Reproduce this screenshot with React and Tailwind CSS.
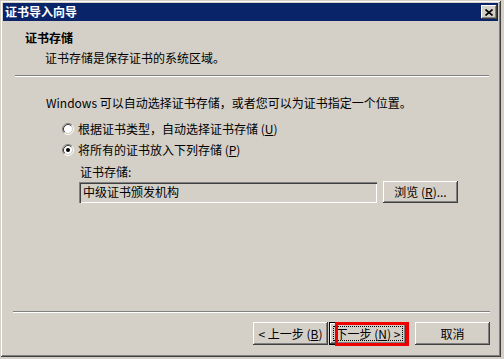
import React from "react";

const btn =
  "flex items-center justify-center bg-[#d4d0c8] text-[12px] leading-none text-black shadow-[inset_-1px_-1px_0_#404040,inset_1px_1px_0_#ffffff,inset_-2px_-2px_0_#808080,inset_2px_2px_0_#d4d0c8]";

function Radio({ checked }) {
  return (
    <svg width="12" height="12" viewBox="0 0 12 12" className="shrink-0">
      <circle cx="6" cy="6" r="4" fill="#ffffff" />
      <path d="M2.11 9.89 A5.5 5.5 0 0 1 9.89 2.11" stroke="#808080" strokeWidth="1" fill="none" />
      <path d="M9.89 2.11 A5.5 5.5 0 0 1 2.11 9.89" stroke="#ffffff" strokeWidth="1" fill="none" />
      <path d="M2.82 9.18 A4.5 4.5 0 0 1 9.18 2.82" stroke="#404040" strokeWidth="1" fill="none" />
      <path d="M9.18 2.82 A4.5 4.5 0 0 1 2.82 9.18" stroke="#d4d0c8" strokeWidth="1" fill="none" />
      {checked && <circle cx="6" cy="6" r="2" fill="#000000" />}
    </svg>
  );
}

function Sep({ className }) {
  return (
    <div className={className}>
      <div className="h-px bg-[#808080]" />
      <div className="h-px bg-white" />
    </div>
  );
}

export default function App() {
  return (
    <div
      className="w-[504px] h-[359px] bg-[#d4d0c8] overflow-hidden text-black"
      style={{ fontFamily: '"Noto Sans CJK SC", "Liberation Sans", sans-serif' }}
    >
      <div className="relative w-[501px] h-[357px] bg-[#d4d0c8] p-[3px] flex flex-col shadow-[inset_1px_1px_0_#d4d0c8,inset_-1px_-1px_0_#404040,inset_2px_2px_0_#ffffff,inset_-2px_-2px_0_#808080]">
        {/* Title bar */}
        <div className="h-[18px] bg-[#0a246a] flex items-center justify-between pl-[2px] pr-[1px]">
          <span className="text-white font-bold text-[12px] leading-none">证书导入向导</span>
          <div className={btn + " w-[16px] h-[14px]"}>
            <svg width="8" height="7" viewBox="0 0 8 7">
              <path d="M0.5 0.5 L7.5 6.5 M7.5 0.5 L0.5 6.5" stroke="#000" strokeWidth="1.6" />
            </svg>
          </div>
        </div>

        {/* Content */}
        <div className="flex-1 flex flex-col text-[12px]">
          <div className="pl-[22px] pt-[10px]">
            <div className="h-[14px] leading-[14px] font-bold">证书存储</div>
            <div className="h-[14px] leading-[14px] pl-[20px] mt-[6px]">
              证书存储是保存证书的系统区域。
            </div>
          </div>
          <Sep className="mt-[10px] ml-[12px] mr-[9px]" />

          <div className="pl-[43px] flex flex-col">
            <div className="mt-[19px] h-[14px] leading-[14px] whitespace-nowrap">
              Windows 可以自动选择证书存储，或者您可以为证书指定一个位置。
            </div>
            <div className="mt-[12px] h-[14px] pl-[16px] flex items-center gap-[4px] whitespace-nowrap">
              <Radio checked={false} />
              <span className="leading-[14px]">
                根据证书类型，自动选择证书存储 (<span className="underline">U</span>)
              </span>
            </div>
            <div className="mt-[7px] h-[14px] pl-[16px] flex items-center gap-[4px] whitespace-nowrap">
              <Radio checked={true} />
              <span className="leading-[14px]">
                将所有的证书放入下列存储 (<span className="underline">P</span>)
              </span>
            </div>
            <div className="mt-[8px] h-[14px] leading-[14px] pl-[34px]">证书存储:</div>
            <div className="mt-[2px] pl-[33px] flex items-center gap-[6px]">
              <div className="w-[298px] h-[21px] flex items-center pl-[4px] bg-[#d4d0c8] shadow-[inset_1px_1px_0_#808080,inset_2px_2px_0_#404040,inset_-1px_-1px_0_#ffffff,inset_-2px_-2px_0_#d4d0c8]">
                中级证书颁发机构
              </div>
              <div className={btn + " w-[75px] h-[22px]"}>
                浏览 (<span className="underline">R</span>)...
              </div>
            </div>
          </div>

          <div className="flex-1" />
          <Sep className="ml-[10px] mr-[8px]" />
          <div className="mt-[9px] pb-[9px] pr-[8px] flex justify-end items-center">
            <div className={btn + " w-[75px] h-[23px]"}>
              &lt; 上一步 (<span className="underline">B</span>)
            </div>
            <div className="ml-[1px] w-[78px] h-[23px] border border-black">
              <div className={btn + " relative w-full h-full"}>
                <div className="absolute inset-[3px] border border-dotted border-black" />
                下一步 (<span className="underline">N</span>) &gt;
              </div>
            </div>
            <div className={btn + " ml-[8px] w-[75px] h-[23px]"}>取消</div>
          </div>
        </div>

        {/* Red annotation box */}
        <div className="absolute left-[335px] top-[322px] w-[74px] h-[24px] border-[3px] border-[#ee0000]" />
      </div>
    </div>
  );
}
